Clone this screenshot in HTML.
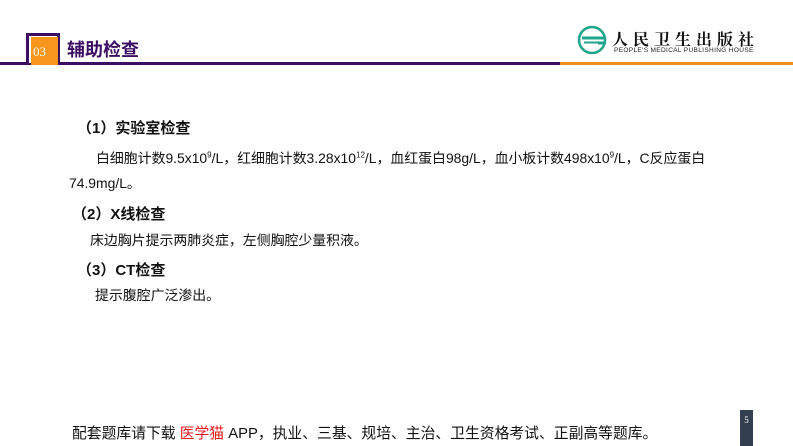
<!DOCTYPE html>
<html><head><meta charset="utf-8"><style>
body{margin:0;width:793px;height:446px;position:relative;background:#fff;overflow:hidden;font-family:"Liberation Sans","Noto Sans CJK SC",sans-serif;color:#111}
.a{position:absolute;white-space:nowrap}
</style></head><body>
<div class="a" style="left:0;top:62px;width:560px;height:3px;background:#3b0e63"></div>
<div class="a" style="left:560px;top:62px;width:233px;height:3px;background:#f0901a"></div>
<div class="a" style="left:26px;top:33px;width:28px;height:27px;border:3px solid #3b0e63;border-bottom:none;background:#fff"></div>
<div class="a" style="left:31px;top:37px;width:27px;height:28px;background:#f7961c"></div>
<div class="a" style="left:33px;top:44px;font-family:'Liberation Serif',serif;font-size:13px;color:#fff">03</div>
<div class="a" style="left:67px;top:36px;font-size:18px;font-weight:bold;color:#3b0e63">辅助检查</div>
<svg class="a" style="left:576px;top:24px" width="34" height="32" viewBox="0 0 34 32"><circle cx="16" cy="16" r="13" fill="none" stroke="#1fa58b" stroke-width="2.5"/><path d="M6 14h22M8 19h20" stroke="#1fa58b" stroke-width="3"/><path d="M8 20h14" stroke="#fff" stroke-width="1"/></svg>
<div class="a" style="left:612px;top:27px;font-size:16px;font-weight:bold;letter-spacing:5px;font-family:'Noto Serif CJK SC',serif;color:#111">人民卫生出版社</div>
<div class="a" style="left:614px;top:47px;font-size:6.5px;color:#222;letter-spacing:0.35px">PEOPLE'S MEDICAL PUBLISHING HOUSE</div>
<div class="a" style="left:77px;top:117px;font-size:15px;font-weight:bold">（1）实验室检查</div>
<div class="a" style="left:96px;top:148px;font-size:13.9px">白细胞计数9.5x10<sup style="font-size:8px">9</sup>/L，红细胞计数3.28x10<sup style="font-size:8px">12</sup>/L，血红蛋白98g/L，血小板计数498x10<sup style="font-size:8px">9</sup>/L，C反应蛋白</div>
<div class="a" style="left:69px;top:173px;font-size:13.9px">74.9mg/L。</div>
<div class="a" style="left:72px;top:203px;font-size:15px;font-weight:bold">（2）X线检查</div>
<div class="a" style="left:90px;top:230px;font-size:13.9px">床边胸片提示两肺炎症，左侧胸腔少量积液。</div>
<div class="a" style="left:77px;top:259px;font-size:15px;font-weight:bold">（3）CT检查</div>
<div class="a" style="left:95px;top:285px;font-size:13.9px">提示腹腔广泛渗出。</div>
<div class="a" style="left:72px;top:422px;font-size:14.8px">配套题库请下载 <span style="color:#e8191b">医学猫</span> APP，执业、三基、规培、主治、卫生资格考试、正副高等题库。</div>
<div class="a" style="left:740px;top:410px;width:13px;height:36px;background:#333e50;color:#fff;font-family:'Liberation Serif',serif;font-size:9px;text-align:center;line-height:20px">5</div>
</body></html>
